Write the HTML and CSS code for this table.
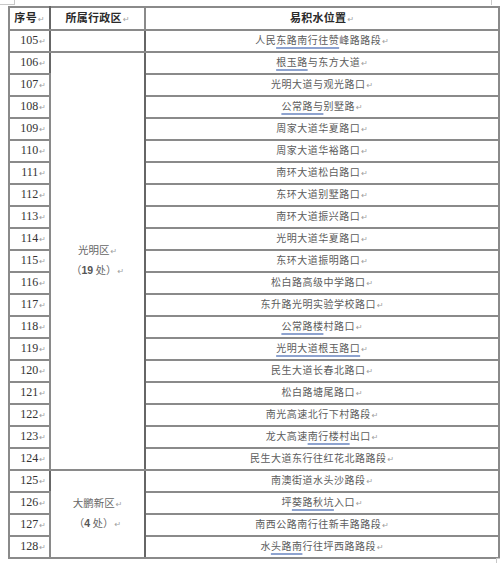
FILE: index.html
```html
<!DOCTYPE html>
<html lang="zh-CN">
<head>
<meta charset="utf-8">
<title>易积水位置</title>
<link rel="stylesheet" href="styles.css">
</head>
<body>
<div class="page">
  <span class="mark mark-tl"></span>
  <span class="mark mark-tr"></span>
  <span class="mark mark-br"></span>
  <table class="sheet">
    <colgroup>
      <col class="c-no">
      <col class="c-dist">
      <col class="c-loc">
    </colgroup>
    <thead>
      <tr>
        <th class="no-h">序号<span class="ret">↵</span></th>
        <th>所属行政区<span class="ret">↵</span></th>
        <th>易积水位置<span class="ret">↵</span></th>
      </tr>
    </thead>
    <tbody>
      <tr><td class="no">105<span class="ret">↵</span></td><td class="dist"></td><td class="loc">人民<u>东路南行往赞</u>峰路路段<span class="ret">↵</span></td></tr>
      <tr><td class="no">106<span class="ret">↵</span></td><td class="dist" rowspan="19"><div>光明区<span class="ret">↵</span></div><div>（<span class="num">19</span> 处）<span class="ret">↵</span></div></td><td class="loc"><u>根玉路</u>与东方大道<span class="ret">↵</span></td></tr>
      <tr><td class="no">107<span class="ret">↵</span></td><td class="loc">光明大道与观光路口<span class="ret">↵</span></td></tr>
      <tr><td class="no">108<span class="ret">↵</span></td><td class="loc"><u>公常路与</u>别墅路<span class="ret">↵</span></td></tr>
      <tr><td class="no">109<span class="ret">↵</span></td><td class="loc">周家大道华夏路口<span class="ret">↵</span></td></tr>
      <tr><td class="no">110<span class="ret">↵</span></td><td class="loc">周家大道华裕路口<span class="ret">↵</span></td></tr>
      <tr><td class="no">111<span class="ret">↵</span></td><td class="loc">南环大道松白路口<span class="ret">↵</span></td></tr>
      <tr><td class="no">112<span class="ret">↵</span></td><td class="loc">东环大道别墅路口<span class="ret">↵</span></td></tr>
      <tr><td class="no">113<span class="ret">↵</span></td><td class="loc">南环大道振兴路口<span class="ret">↵</span></td></tr>
      <tr><td class="no">114<span class="ret">↵</span></td><td class="loc">光明大道华夏路口<span class="ret">↵</span></td></tr>
      <tr><td class="no">115<span class="ret">↵</span></td><td class="loc">东环大道振明路口<span class="ret">↵</span></td></tr>
      <tr><td class="no">116<span class="ret">↵</span></td><td class="loc">松白路高级中学路口<span class="ret">↵</span></td></tr>
      <tr><td class="no">117<span class="ret">↵</span></td><td class="loc">东升路光明实验学校路口<span class="ret">↵</span></td></tr>
      <tr><td class="no">118<span class="ret">↵</span></td><td class="loc"><u>公常路楼</u>村路口<span class="ret">↵</span></td></tr>
      <tr><td class="no">119<span class="ret">↵</span></td><td class="loc"><u>光明大道根玉路口</u><span class="ret">↵</span></td></tr>
      <tr><td class="no">120<span class="ret">↵</span></td><td class="loc">民生大道长春北路口<span class="ret">↵</span></td></tr>
      <tr><td class="no">121<span class="ret">↵</span></td><td class="loc">松白路塘尾路口<span class="ret">↵</span></td></tr>
      <tr><td class="no">122<span class="ret">↵</span></td><td class="loc">南光高速北行下村路段<span class="ret">↵</span></td></tr>
      <tr><td class="no">123<span class="ret">↵</span></td><td class="loc">龙大高速<u>南行楼村</u>出口<span class="ret">↵</span></td></tr>
      <tr><td class="no">124<span class="ret">↵</span></td><td class="loc">民生大道东行往红花北路路段<span class="ret">↵</span></td></tr>
      <tr><td class="no">125<span class="ret">↵</span></td><td class="dist" rowspan="4"><div>大鹏新区<span class="ret">↵</span></div><div>（<span class="num">4</span> 处）<span class="ret">↵</span></div></td><td class="loc">南澳街道水头沙路段<span class="ret">↵</span></td></tr>
      <tr><td class="no">126<span class="ret">↵</span></td><td class="loc">坪<u>葵路秋坑</u>入口<span class="ret">↵</span></td></tr>
      <tr><td class="no">127<span class="ret">↵</span></td><td class="loc">南西公路南行往新丰路路段<span class="ret">↵</span></td></tr>
      <tr><td class="no">128<span class="ret">↵</span></td><td class="loc">水<u>头路南</u>行往坪西路路段<span class="ret">↵</span></td></tr>
    </tbody>
  </table>
</div>
</body>
</html>
```

FILE: styles.css
```css
html, body {
  margin: 0;
  padding: 0;
  background: #ffffff;
}

.page {
  position: relative;
  width: 500px;
  height: 563px;
  padding: 6px 0 0 8px;
  box-sizing: border-box;
  font-family: "Noto Sans CJK SC", "Noto Sans", sans-serif;
}

.mark {
  position: absolute;
  border-color: #c8c8c8;
  border-style: solid;
  border-width: 0;
}
.mark-tl {
  left: 0;
  top: 0;
  width: 14px;
  height: 4px;
  border-right-width: 1px;
  border-bottom-width: 1px;
}
.mark-tr {
  left: 491px;
  top: 0;
  width: 0;
  height: 5px;
  border-left-width: 1px;
}
.mark-br {
  left: 496px;
  top: 558px;
  width: 4px;
  height: 5px;
  border-left-width: 1px;
  border-top-width: 1px;
}

.sheet {
  border-collapse: collapse;
  table-layout: fixed;
  width: 490px;
  border: 2px solid #7c7c7c;
}

.c-no { width: 41px; }
.c-dist { width: 95px; }
.c-loc { width: 354px; }

.sheet th,
.sheet td {
  border: 2px solid #8a8a8a;
  padding: 0;
  height: 18px;
  line-height: 18px;
  white-space: nowrap;
  overflow: hidden;
}

.sheet thead th {
  height: 19px;
  line-height: 19px;
  font-size: 11px;
  font-weight: bold;
  color: #2a2a2a;
  text-align: center;
  letter-spacing: 0.3px;
}

.sheet th:first-child,
.sheet td.no {
  border-right-color: #666;
}
.sheet td.dist {
  border-right-color: #666;
}

.sheet td.no {
  font-family: "Liberation Serif", "Times New Roman", serif;
  font-size: 12px;
  color: #333;
  text-align: right;
  padding-right: 3px;
}

.sheet td.dist {
  text-align: center;
  vertical-align: middle;
  font-size: 10.5px;
  color: #666;
  line-height: 18px;
}

.sheet td.dist .num {
  font-family: "Liberation Sans", Arial, sans-serif;
  font-weight: bold;
  color: #555;
}

.sheet td.loc {
  text-align: center;
  font-size: 10px;
  letter-spacing: 0.5px;
  color: #5c5c5c;
}

.sheet td.loc u {
  text-decoration: underline;
  text-decoration-color: #8ea3cf;
  text-decoration-thickness: 2px;
  text-underline-offset: 3px;
}

.ret {
  font-family: "DejaVu Sans", sans-serif;
  font-size: 8px;
  font-weight: normal;
  color: #a0a0a0;
  letter-spacing: 0;
  margin-left: 1px;
  text-decoration: none;
}
```
